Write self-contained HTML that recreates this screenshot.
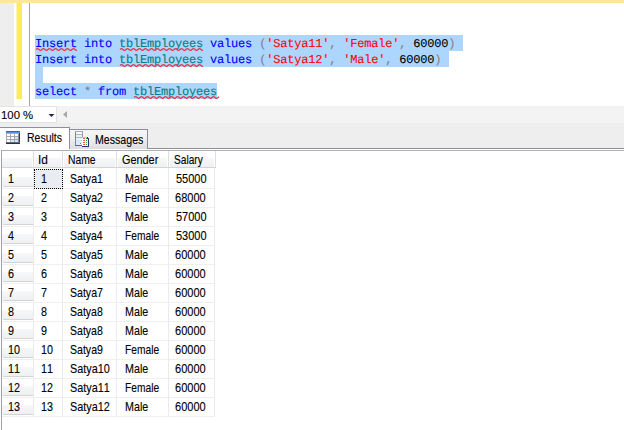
<!DOCTYPE html>
<html><head><meta charset="utf-8"><title>SSMS</title>
<style>
html,body{margin:0;padding:0;}
body{width:624px;height:430px;overflow:hidden;background:#fff;position:relative;font-family:"Liberation Sans",sans-serif;font-size:13px;color:#000;font-kerning:none;}
div,span{box-sizing:border-box;}
.abs{position:absolute;}
.sel{position:absolute;background:#add6ff;}
.code{position:absolute;-webkit-text-stroke-width:0.1px;text-rendering:geometricPrecision;height:16px;line-height:16px;font-family:"Liberation Mono",monospace;white-space:pre;color:#000;}
.k{color:#0000ff;}.t{color:#008080;}.s{color:#ff0000;}.g{color:#808080;}
.ui{position:absolute;white-space:pre;line-height:16px;height:16px;transform-origin:0 0;-webkit-text-stroke:0.12px #000;}
.rh{position:absolute;left:2px;width:31px;height:18px;background:linear-gradient(#fff 0,#fff 50%,#f6f7f9 50%,#eff0f2 100%);}
.rhl{position:absolute;left:3px;width:30px;height:1px;background:#d3d3d3;}
.hl{position:absolute;height:1px;background:#efefef;left:2px;width:213px;}
.vl{position:absolute;width:1px;background:#ebebeb;top:168px;height:249px;}
</style></head><body>

<div class="abs" style="left:0;top:0;width:624px;height:3px;background:#ffe6a0"></div>
<div class="abs" style="left:0;top:3px;width:14px;height:103px;background:#eeeeee"></div>
<div class="abs" style="left:16px;top:3px;width:1px;height:96px;background:#fff4ae"></div>
<div class="abs" style="left:17px;top:3px;width:5px;height:96px;background:#ffeb5c"></div>
<div class="abs" style="left:29px;top:3px;width:1px;height:103px;background:#a5a5a5"></div>
<div class="sel" style="left:35px;top:35px;width:428px;height:16px"></div>
<div class="sel" style="left:35px;top:51px;width:414px;height:16px"></div>
<div class="sel" style="left:35px;top:67px;width:8px;height:16px"></div>
<div class="sel" style="left:35px;top:83px;width:182px;height:16px"></div>
<div class="code" style="left:35px;font-size:12.0px;letter-spacing:-0.2px;top:36px"><span class="k">Insert</span> <span class="k">into</span> <span class="t">tblEmployees</span> <span class="k">values</span> <span class="g">(</span><span class="s">'Satya11'</span><span class="g">,</span> <span class="s">'Female'</span><span class="g">,</span> 60000<span class="g">)</span></div>
<div class="code" style="left:35px;font-size:12.0px;letter-spacing:-0.2px;top:52px"><span class="k">Insert</span> <span class="k">into</span> <span class="t">tblEmployees</span> <span class="k">values</span> <span class="g">(</span><span class="s">'Satya12'</span><span class="g">,</span> <span class="s">'Male'</span><span class="g">,</span> 60000<span class="g">)</span></div>
<div class="code" style="left:35px;font-size:12.0px;letter-spacing:-0.2px;top:84px"><span class="k">select</span> <span class="g">*</span> <span class="k">from</span> <span class="t">tblEmployees</span></div>
<svg class="abs" style="left:0;top:0" width="624" height="110" viewBox="0 0 624 110"><clipPath id="c1"><rect x="35" y="46.5" width="42.0" height="6"/></clipPath><path clip-path="url(#c1)" d="M36 49.5 q1.5 -1.6 3 0 q1.5 1.6 3 0 q1.5 -1.6 3 0 q1.5 1.6 3 0 q1.5 -1.6 3 0 q1.5 1.6 3 0 q1.5 -1.6 3 0 q1.5 1.6 3 0 q1.5 -1.6 3 0 q1.5 1.6 3 0 q1.5 -1.6 3 0 q1.5 1.6 3 0 q1.5 -1.6 3 0 q1.5 1.6 3 0" fill="none" stroke="#ee3344" stroke-width="1.2"/><clipPath id="c2"><rect x="119" y="46.5" width="84.0" height="6"/></clipPath><path clip-path="url(#c2)" d="M120 49.5 q1.5 -1.6 3 0 q1.5 1.6 3 0 q1.5 -1.6 3 0 q1.5 1.6 3 0 q1.5 -1.6 3 0 q1.5 1.6 3 0 q1.5 -1.6 3 0 q1.5 1.6 3 0 q1.5 -1.6 3 0 q1.5 1.6 3 0 q1.5 -1.6 3 0 q1.5 1.6 3 0 q1.5 -1.6 3 0 q1.5 1.6 3 0 q1.5 -1.6 3 0 q1.5 1.6 3 0 q1.5 -1.6 3 0 q1.5 1.6 3 0 q1.5 -1.6 3 0 q1.5 1.6 3 0 q1.5 -1.6 3 0 q1.5 1.6 3 0 q1.5 -1.6 3 0 q1.5 1.6 3 0 q1.5 -1.6 3 0 q1.5 1.6 3 0 q1.5 -1.6 3 0 q1.5 1.6 3 0" fill="none" stroke="#ee3344" stroke-width="1.2"/><clipPath id="c3"><rect x="119" y="62.5" width="84.0" height="6"/></clipPath><path clip-path="url(#c3)" d="M120 65.5 q1.5 -1.6 3 0 q1.5 1.6 3 0 q1.5 -1.6 3 0 q1.5 1.6 3 0 q1.5 -1.6 3 0 q1.5 1.6 3 0 q1.5 -1.6 3 0 q1.5 1.6 3 0 q1.5 -1.6 3 0 q1.5 1.6 3 0 q1.5 -1.6 3 0 q1.5 1.6 3 0 q1.5 -1.6 3 0 q1.5 1.6 3 0 q1.5 -1.6 3 0 q1.5 1.6 3 0 q1.5 -1.6 3 0 q1.5 1.6 3 0 q1.5 -1.6 3 0 q1.5 1.6 3 0 q1.5 -1.6 3 0 q1.5 1.6 3 0 q1.5 -1.6 3 0 q1.5 1.6 3 0 q1.5 -1.6 3 0 q1.5 1.6 3 0 q1.5 -1.6 3 0 q1.5 1.6 3 0" fill="none" stroke="#ee3344" stroke-width="1.2"/><clipPath id="c4"><rect x="133" y="94.5" width="86.0" height="6"/></clipPath><path clip-path="url(#c4)" d="M134 97.5 q1.5 -1.6 3 0 q1.5 1.6 3 0 q1.5 -1.6 3 0 q1.5 1.6 3 0 q1.5 -1.6 3 0 q1.5 1.6 3 0 q1.5 -1.6 3 0 q1.5 1.6 3 0 q1.5 -1.6 3 0 q1.5 1.6 3 0 q1.5 -1.6 3 0 q1.5 1.6 3 0 q1.5 -1.6 3 0 q1.5 1.6 3 0 q1.5 -1.6 3 0 q1.5 1.6 3 0 q1.5 -1.6 3 0 q1.5 1.6 3 0 q1.5 -1.6 3 0 q1.5 1.6 3 0 q1.5 -1.6 3 0 q1.5 1.6 3 0 q1.5 -1.6 3 0 q1.5 1.6 3 0 q1.5 -1.6 3 0 q1.5 1.6 3 0 q1.5 -1.6 3 0 q1.5 1.6 3 0 q1.5 -1.6 3 0" fill="none" stroke="#ee3344" stroke-width="1.2"/></svg>
<div class="abs" style="left:0;top:106px;width:624px;height:17px;background:#f3f3f3"></div>
<div class="abs" style="left:0;top:106px;width:57px;height:17px;background:#fff;border:1px solid #e3e3e3;border-left:none"></div>
<div class="ui" style="left:1.10px;top:106.85px;font-size:11.6px;transform:scaleX(0.9798)">100 %</div>
<svg class="abs" style="left:48px;top:113px" width="7" height="5" viewBox="0 0 7 5"><path d="M0.5 1 L6.5 1 L3.5 4 Z" fill="#1e2a4a"/></svg>
<svg class="abs" style="left:62px;top:110px" width="6" height="9" viewBox="0 0 6 9"><path d="M5 1 L5 8 L1 4.5 Z" fill="#a8a8a8"/></svg>
<div class="abs" style="left:0;top:123px;width:624px;height:25px;background:#eeeeee"></div>
<div class="abs" style="left:0;top:148px;width:624px;height:1px;background:#8e8e96"></div>
<div class="abs" style="left:69px;top:129px;width:79px;height:20px;border:1px solid #8e8e98;border-bottom:none;background:linear-gradient(#f6f6f6 0,#f0f0f0 45%,#dddddd 100%)"></div>
<div class="abs" style="left:-1px;top:127px;width:71px;height:22px;border:1px solid #8e8e98;border-bottom:none;background:#fff"></div>
<div class="ui" style="left:26.66px;top:129.50px;font-size:13.0px;transform:scaleX(0.8063)">Results</div>
<div class="ui" style="left:95.45px;top:131.50px;font-size:13.0px;transform:scaleX(0.8163)">Messages</div>
<svg class="abs" style="left:6px;top:131px" width="14" height="13" viewBox="0 0 14 13" shape-rendering="crispEdges"><rect x="0" y="0" width="14" height="13" fill="#a6a6ac"/><rect x="0" y="0" width="14" height="1" fill="#2f62d6"/><rect x="0" y="1" width="14" height="1" fill="#5b8ce8"/><rect x="0" y="2" width="14" height="1" fill="#8ab0f0"/><rect x="12" y="3" width="1" height="10" fill="#8a8a96"/><rect x="13" y="2" width="1" height="11" fill="#3a3a52"/><rect x="0" y="11" width="14" height="1" fill="#6a6a74"/><rect x="0" y="12" width="14" height="1" fill="#30303e"/><rect x="1" y="3" width="3" height="2" fill="#ffffff"/><rect x="1" y="6" width="3" height="2" fill="#ffffff"/><rect x="1" y="9" width="3" height="2" fill="#ffffff"/><rect x="5" y="3" width="3" height="2" fill="#ffffff"/><rect x="5" y="6" width="3" height="2" fill="#ffffff"/><rect x="5" y="9" width="3" height="2" fill="#cfe6ff"/><rect x="9" y="3" width="3" height="2" fill="#ffffff"/><rect x="9" y="6" width="3" height="2" fill="#cfe6ff"/><rect x="9" y="9" width="3" height="2" fill="#cfe6ff"/></svg>
<svg class="abs" style="left:75px;top:131px" width="15" height="16" viewBox="0 0 15 16" shape-rendering="crispEdges"><rect x="0" y="0" width="8" height="15" fill="#e8f0fa"/><rect x="0" y="0" width="1" height="15" fill="#7d7dcc"/><rect x="0" y="0" width="8" height="1" fill="#a8a8ae"/><rect x="7" y="0" width="1" height="6" fill="#9a9aa8"/><rect x="1" y="3" width="6" height="1" fill="#b4b8c0"/><rect x="1" y="6" width="6" height="1" fill="#b4b8c0"/><rect x="0" y="14" width="8" height="1" fill="#606878"/><rect x="1" y="1" width="6" height="2" fill="#f4f8ff"/><rect x="1" y="9" width="6" height="5" fill="#dceaf8"/><rect x="5" y="12" width="1" height="1" fill="#3cb43c"/><rect x="7" y="6" width="7" height="10" fill="#ffffff"/><rect x="13" y="8" width="1" height="8" fill="#283078"/><rect x="7" y="15" width="7" height="1" fill="#283078"/><rect x="7" y="6" width="5" height="1" fill="#c0c8e0"/><rect x="12" y="6" width="1" height="2" fill="#283078"/><rect x="13" y="7" width="1" height="1" fill="#283078"/><rect x="8" y="7" width="2" height="1" fill="#ff5a30"/><rect x="11" y="7" width="1" height="1" fill="#3c9c3c"/><rect x="8" y="9" width="2" height="1" fill="#ff5a30"/><rect x="11" y="9" width="1" height="1" fill="#3c9c3c"/><rect x="8" y="11" width="2" height="1" fill="#ff5a30"/><rect x="11" y="11" width="1" height="1" fill="#3c9c3c"/><rect x="8" y="13" width="2" height="1" fill="#ff5a30"/><rect x="11" y="13" width="1" height="1" fill="#3c9c3c"/></svg>
<div class="abs" style="left:1px;top:150px;width:623px;height:1px;background:#b0b0b8"></div>
<div class="abs" style="left:1px;top:150px;width:1px;height:280px;background:#a0a0a8"></div>
<div class="abs" style="left:2px;top:151px;width:213px;height:16px;background:linear-gradient(#fff 0,#fff 44%,#f6f7f9 44%,#eff0f2 100%)"></div>
<div class="abs" style="left:2px;top:167px;width:214px;height:1px;background:#d4d4d4"></div>
<div class="abs" style="left:33px;top:151px;width:1px;height:16px;background:#dedede"></div>
<div class="abs" style="left:32px;top:151px;width:1px;height:16px;background:#fff"></div>
<div class="abs" style="left:34px;top:151px;width:1px;height:16px;background:#fff"></div>
<div class="abs" style="left:62px;top:151px;width:1px;height:16px;background:#dedede"></div>
<div class="abs" style="left:61px;top:151px;width:1px;height:16px;background:#fff"></div>
<div class="abs" style="left:63px;top:151px;width:1px;height:16px;background:#fff"></div>
<div class="abs" style="left:116px;top:151px;width:1px;height:16px;background:#dedede"></div>
<div class="abs" style="left:115px;top:151px;width:1px;height:16px;background:#fff"></div>
<div class="abs" style="left:117px;top:151px;width:1px;height:16px;background:#fff"></div>
<div class="abs" style="left:168px;top:151px;width:1px;height:16px;background:#dedede"></div>
<div class="abs" style="left:167px;top:151px;width:1px;height:16px;background:#fff"></div>
<div class="abs" style="left:169px;top:151px;width:1px;height:16px;background:#fff"></div>
<div class="abs" style="left:215px;top:151px;width:1px;height:16px;background:#dedede"></div>
<div class="abs" style="left:214px;top:151px;width:1px;height:16px;background:#fff"></div>
<div class="ui" style="left:37.93px;top:151.50px;font-size:13.0px;transform:scaleX(0.9170)">Id</div>
<div class="ui" style="left:67.77px;top:151.50px;font-size:13.0px;transform:scaleX(0.7960)">Name</div>
<div class="ui" style="left:121.86px;top:151.50px;font-size:13.0px;transform:scaleX(0.8368)">Gender</div>
<div class="ui" style="left:173.79px;top:151.50px;font-size:13.0px;transform:scaleX(0.7790)">Salary</div>
<div class="rh" style="top:168px"></div><div class="rhl" style="top:186px"></div>
<div class="rh" style="top:187px"></div><div class="rhl" style="top:205px"></div>
<div class="rh" style="top:206px"></div><div class="rhl" style="top:224px"></div>
<div class="rh" style="top:225px"></div><div class="rhl" style="top:243px"></div>
<div class="rh" style="top:244px"></div><div class="rhl" style="top:262px"></div>
<div class="rh" style="top:263px"></div><div class="rhl" style="top:281px"></div>
<div class="rh" style="top:282px"></div><div class="rhl" style="top:300px"></div>
<div class="rh" style="top:301px"></div><div class="rhl" style="top:319px"></div>
<div class="rh" style="top:320px"></div><div class="rhl" style="top:338px"></div>
<div class="rh" style="top:339px"></div><div class="rhl" style="top:357px"></div>
<div class="rh" style="top:358px"></div><div class="rhl" style="top:376px"></div>
<div class="rh" style="top:377px"></div><div class="rhl" style="top:395px"></div>
<div class="rh" style="top:396px"></div><div class="rhl" style="top:414px"></div>
<div class="hl" style="top:188px"></div>
<div class="hl" style="top:207px"></div>
<div class="hl" style="top:226px"></div>
<div class="hl" style="top:245px"></div>
<div class="hl" style="top:264px"></div>
<div class="hl" style="top:283px"></div>
<div class="hl" style="top:302px"></div>
<div class="hl" style="top:321px"></div>
<div class="hl" style="top:340px"></div>
<div class="hl" style="top:359px"></div>
<div class="hl" style="top:378px"></div>
<div class="hl" style="top:397px"></div>
<div class="hl" style="top:416px"></div>
<div class="vl" style="left:33px"></div>
<div class="vl" style="left:62px"></div>
<div class="vl" style="left:116px"></div>
<div class="vl" style="left:168px"></div>
<div class="vl" style="left:214px"></div>
<div class="abs" style="left:34px;top:169px;width:29px;height:20px;background:#e9edf1;border:1px dotted #000"></div>
<div class="ui" style="left:7.80px;top:170.50px;font-size:13.0px;transform:scaleX(0.8300)">1</div>
<div class="ui" style="left:40.90px;top:170.50px;font-size:13.0px;transform:scaleX(0.8300)">1</div>
<div class="ui" style="left:69.88px;top:170.50px;font-size:13.0px;transform:scaleX(0.8132)">Satya1</div>
<div class="ui" style="left:124.74px;top:170.50px;font-size:13.0px;transform:scaleX(0.8250)">Male</div>
<div class="ui" style="left:175.56px;top:170.50px;font-size:13.0px;transform:scaleX(0.8447)">55000</div>
<div class="ui" style="left:7.80px;top:189.50px;font-size:13.0px;transform:scaleX(0.8300)">2</div>
<div class="ui" style="left:40.90px;top:189.50px;font-size:13.0px;transform:scaleX(0.8300)">2</div>
<div class="ui" style="left:69.88px;top:189.50px;font-size:13.0px;transform:scaleX(0.8132)">Satya2</div>
<div class="ui" style="left:124.78px;top:189.50px;font-size:13.0px;transform:scaleX(0.7864)">Female</div>
<div class="ui" style="left:175.45px;top:189.50px;font-size:13.0px;transform:scaleX(0.8478)">68000</div>
<div class="ui" style="left:7.80px;top:208.50px;font-size:13.0px;transform:scaleX(0.8300)">3</div>
<div class="ui" style="left:40.90px;top:208.50px;font-size:13.0px;transform:scaleX(0.8300)">3</div>
<div class="ui" style="left:69.88px;top:208.50px;font-size:13.0px;transform:scaleX(0.8105)">Satya3</div>
<div class="ui" style="left:124.74px;top:208.50px;font-size:13.0px;transform:scaleX(0.8250)">Male</div>
<div class="ui" style="left:175.56px;top:208.50px;font-size:13.0px;transform:scaleX(0.8447)">57000</div>
<div class="ui" style="left:7.80px;top:227.50px;font-size:13.0px;transform:scaleX(0.8300)">4</div>
<div class="ui" style="left:40.90px;top:227.50px;font-size:13.0px;transform:scaleX(0.8300)">4</div>
<div class="ui" style="left:69.88px;top:227.50px;font-size:13.0px;transform:scaleX(0.8078)">Satya4</div>
<div class="ui" style="left:124.78px;top:227.50px;font-size:13.0px;transform:scaleX(0.7864)">Female</div>
<div class="ui" style="left:175.56px;top:227.50px;font-size:13.0px;transform:scaleX(0.8447)">53000</div>
<div class="ui" style="left:7.80px;top:246.50px;font-size:13.0px;transform:scaleX(0.8300)">5</div>
<div class="ui" style="left:40.90px;top:246.50px;font-size:13.0px;transform:scaleX(0.8300)">5</div>
<div class="ui" style="left:69.88px;top:246.50px;font-size:13.0px;transform:scaleX(0.8105)">Satya5</div>
<div class="ui" style="left:124.74px;top:246.50px;font-size:13.0px;transform:scaleX(0.8250)">Male</div>
<div class="ui" style="left:175.45px;top:246.50px;font-size:13.0px;transform:scaleX(0.8478)">60000</div>
<div class="ui" style="left:7.80px;top:265.50px;font-size:13.0px;transform:scaleX(0.8300)">6</div>
<div class="ui" style="left:40.90px;top:265.50px;font-size:13.0px;transform:scaleX(0.8300)">6</div>
<div class="ui" style="left:69.88px;top:265.50px;font-size:13.0px;transform:scaleX(0.8105)">Satya6</div>
<div class="ui" style="left:124.74px;top:265.50px;font-size:13.0px;transform:scaleX(0.8250)">Male</div>
<div class="ui" style="left:175.45px;top:265.50px;font-size:13.0px;transform:scaleX(0.8478)">60000</div>
<div class="ui" style="left:7.80px;top:284.50px;font-size:13.0px;transform:scaleX(0.8300)">7</div>
<div class="ui" style="left:40.90px;top:284.50px;font-size:13.0px;transform:scaleX(0.8300)">7</div>
<div class="ui" style="left:69.88px;top:284.50px;font-size:13.0px;transform:scaleX(0.8132)">Satya7</div>
<div class="ui" style="left:124.74px;top:284.50px;font-size:13.0px;transform:scaleX(0.8250)">Male</div>
<div class="ui" style="left:175.45px;top:284.50px;font-size:13.0px;transform:scaleX(0.8478)">60000</div>
<div class="ui" style="left:7.80px;top:303.50px;font-size:13.0px;transform:scaleX(0.8300)">8</div>
<div class="ui" style="left:40.90px;top:303.50px;font-size:13.0px;transform:scaleX(0.8300)">8</div>
<div class="ui" style="left:69.88px;top:303.50px;font-size:13.0px;transform:scaleX(0.8105)">Satya8</div>
<div class="ui" style="left:124.74px;top:303.50px;font-size:13.0px;transform:scaleX(0.8250)">Male</div>
<div class="ui" style="left:175.45px;top:303.50px;font-size:13.0px;transform:scaleX(0.8478)">60000</div>
<div class="ui" style="left:7.80px;top:322.50px;font-size:13.0px;transform:scaleX(0.8300)">9</div>
<div class="ui" style="left:40.90px;top:322.50px;font-size:13.0px;transform:scaleX(0.8300)">9</div>
<div class="ui" style="left:69.88px;top:322.50px;font-size:13.0px;transform:scaleX(0.8105)">Satya8</div>
<div class="ui" style="left:124.74px;top:322.50px;font-size:13.0px;transform:scaleX(0.8250)">Male</div>
<div class="ui" style="left:175.45px;top:322.50px;font-size:13.0px;transform:scaleX(0.8478)">60000</div>
<div class="ui" style="left:7.80px;top:341.50px;font-size:13.0px;transform:scaleX(0.8300)">10</div>
<div class="ui" style="left:40.90px;top:341.50px;font-size:13.0px;transform:scaleX(0.8300)">10</div>
<div class="ui" style="left:69.88px;top:341.50px;font-size:13.0px;transform:scaleX(0.8132)">Satya9</div>
<div class="ui" style="left:124.78px;top:341.50px;font-size:13.0px;transform:scaleX(0.7864)">Female</div>
<div class="ui" style="left:175.45px;top:341.50px;font-size:13.0px;transform:scaleX(0.8478)">60000</div>
<div class="ui" style="left:7.80px;top:360.50px;font-size:13.0px;transform:scaleX(0.8300)">11</div>
<div class="ui" style="left:40.90px;top:360.50px;font-size:13.0px;transform:scaleX(0.8300)">11</div>
<div class="ui" style="left:69.87px;top:360.50px;font-size:13.0px;transform:scaleX(0.8328)">Satya10</div>
<div class="ui" style="left:124.74px;top:360.50px;font-size:13.0px;transform:scaleX(0.8250)">Male</div>
<div class="ui" style="left:175.45px;top:360.50px;font-size:13.0px;transform:scaleX(0.8478)">60000</div>
<div class="ui" style="left:7.80px;top:379.50px;font-size:13.0px;transform:scaleX(0.8300)">12</div>
<div class="ui" style="left:40.90px;top:379.50px;font-size:13.0px;transform:scaleX(0.8300)">12</div>
<div class="ui" style="left:69.87px;top:379.50px;font-size:13.0px;transform:scaleX(0.8351)">Satya11</div>
<div class="ui" style="left:124.78px;top:379.50px;font-size:13.0px;transform:scaleX(0.7864)">Female</div>
<div class="ui" style="left:175.45px;top:379.50px;font-size:13.0px;transform:scaleX(0.8478)">60000</div>
<div class="ui" style="left:7.80px;top:398.50px;font-size:13.0px;transform:scaleX(0.8300)">13</div>
<div class="ui" style="left:40.90px;top:398.50px;font-size:13.0px;transform:scaleX(0.8300)">13</div>
<div class="ui" style="left:69.87px;top:398.50px;font-size:13.0px;transform:scaleX(0.8351)">Satya12</div>
<div class="ui" style="left:124.74px;top:398.50px;font-size:13.0px;transform:scaleX(0.8250)">Male</div>
<div class="ui" style="left:175.45px;top:398.50px;font-size:13.0px;transform:scaleX(0.8478)">60000</div>
</body></html>
